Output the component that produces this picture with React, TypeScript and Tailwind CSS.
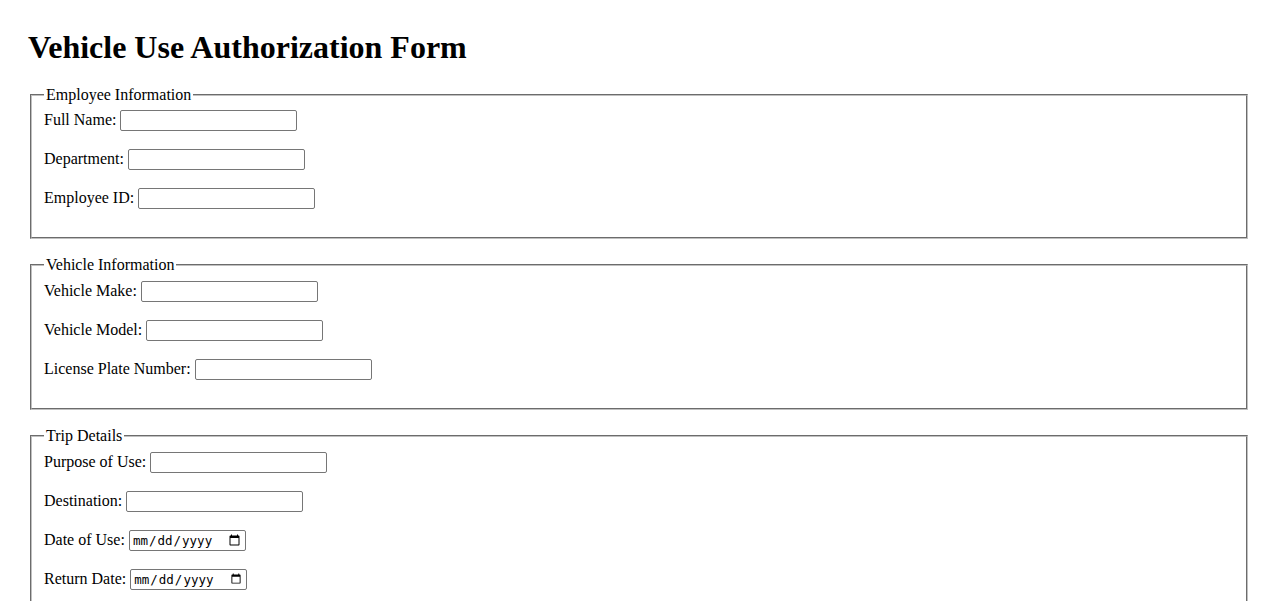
import type { ReactNode } from "react";

const textInput =
  "h-[21px] w-[177px] rounded-[2px] border border-[#767676] bg-white px-[2px] py-[1px] align-baseline font-['Liberation_Sans',Arial,sans-serif] text-[13.33px]";
const dateInput =
  "h-[21px] w-[117px] rounded-[2px] border border-[#767676] bg-white px-[2px] py-[1px] align-baseline font-['DejaVu_Sans_Mono',monospace] text-[12.5px]";

function Section({ title, children }: { title: string; children: ReactNode }) {
  return (
    <fieldset className="mx-[2px] mb-[17px] border-2 border-[#c0c0c0] px-3 pt-[6.6px] pb-[10px] [border-style:groove]">
      <legend className="px-[2px]">{title}</legend>
      {children}
    </fieldset>
  );
}

function Field({ label, id, type = "text" }: { label: string; id: string; type?: string }) {
  return (
    <>
      <label htmlFor={id}>{label}:</label>{" "}
      <input id={id} name={id} type={type} className={type === "date" ? dateInput : textInput} />
      <br />
      <br />
    </>
  );
}

export default function App() {
  return (
    <div className="min-h-screen bg-white p-[8px] font-['Liberation_Serif','Times_New_Roman',serif] text-base leading-[normal] text-black">
      <div className="px-5">
        <h1 className="mt-[21.44px] mb-[19.44px] text-[32px] leading-[normal] font-bold">
          Vehicle Use Authorization Form
        </h1>
        <form>
          <Section title="Employee Information">
            <Field label="Full Name" id="fullName" />
            <Field label="Department" id="department" />
            <Field label="Employee ID" id="employeeId" />
          </Section>
          <Section title="Vehicle Information">
            <Field label="Vehicle Make" id="make" />
            <Field label="Vehicle Model" id="model" />
            <Field label="License Plate Number" id="plate" />
          </Section>
          <Section title="Trip Details">
            <Field label="Purpose of Use" id="purpose" />
            <Field label="Destination" id="destination" />
            <Field label="Date of Use" id="dateOfUse" type="date" />
            <Field label="Return Date" id="returnDate" type="date" />
          </Section>
          <Section title="Authorization">
            <Field label="Supervisor Name" id="supervisor" />
            <Field label="Signature" id="signature" />
          </Section>
        </form>
      </div>
    </div>
  );
}
